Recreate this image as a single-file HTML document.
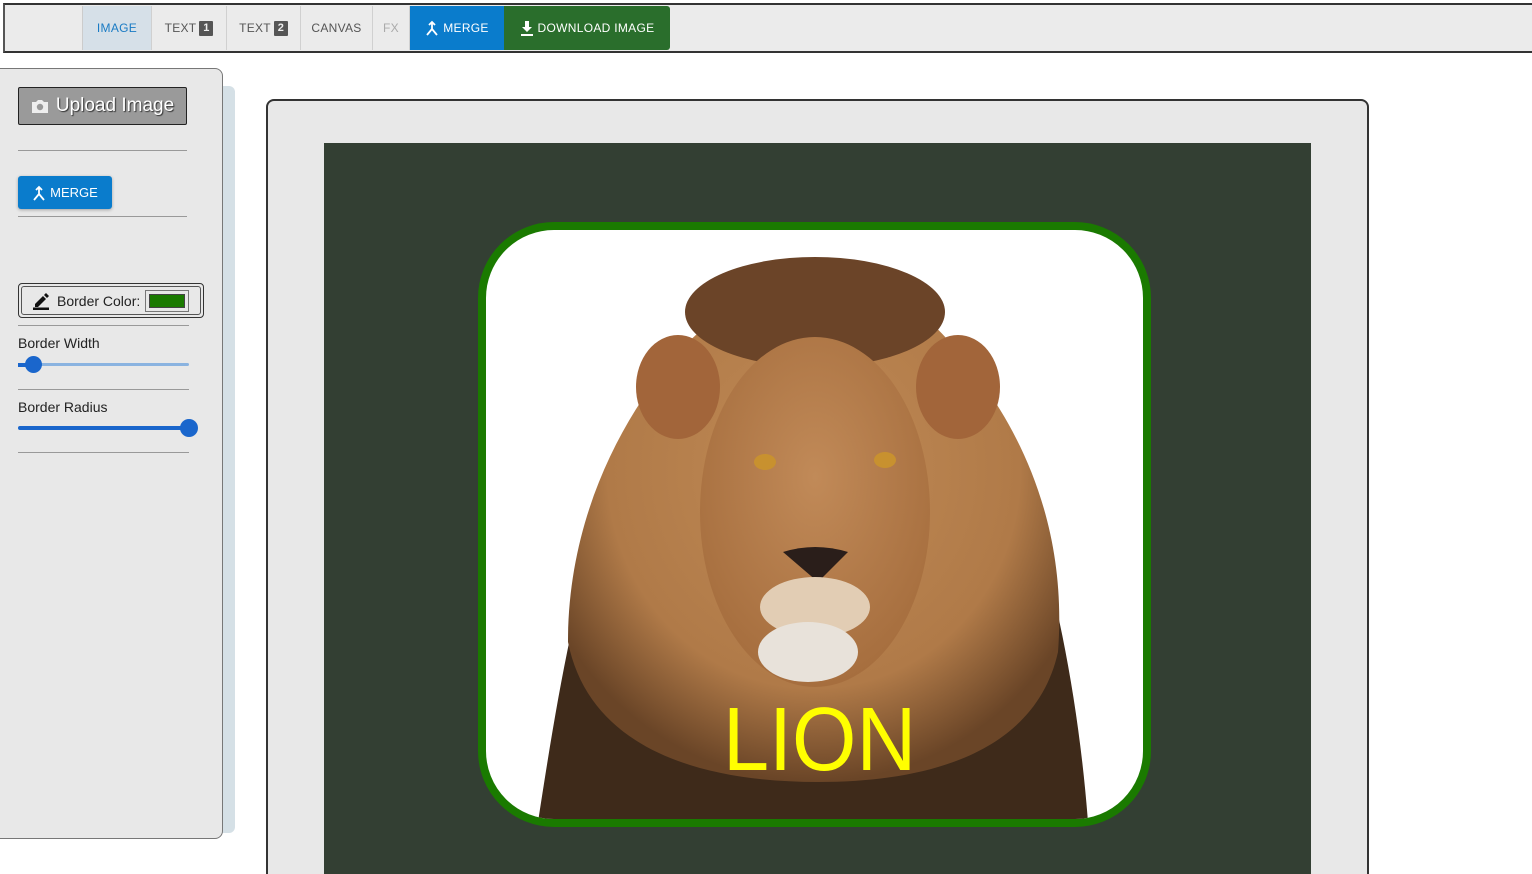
<!DOCTYPE html>
<html><head><meta charset="utf-8"><style>
*{box-sizing:border-box;margin:0;padding:0}
html,body{width:1532px;height:874px;overflow:hidden}
body{background:#fff;position:relative;font-family:"Liberation Sans",sans-serif}
.top{position:absolute;left:3px;top:3px;width:1529px;height:50px;border-top:2px solid #333;border-bottom:2px solid #333;border-left:2px solid #555;background:#ebebeb}
.tab{position:absolute;top:1px;height:44px;display:flex;align-items:center;justify-content:center;font-size:12px;letter-spacing:.3px;color:#555;border-right:1px solid #d0d0d0}
.num{display:inline-block;background:#555;color:#eee;font-size:11px;font-weight:bold;width:14px;height:15px;line-height:15px;text-align:center;margin-left:3px;border-radius:1px}
.side{position:absolute;left:-10px;top:68px;width:233px;height:771px;background:#e8e8e8;border:1px solid #777;border-radius:8px}
.strip{position:absolute;left:222px;top:86px;width:13px;height:747px;background:#d5e0e6;border-radius:0 6px 6px 0}
.hr{position:absolute;left:18px;width:169px;height:1px;background:#999}
.lbl{position:absolute;left:18px;font-size:14px;color:#222}
</style></head><body>
<div class="top">
 <div class="tab" style="left:77px;width:70px;background:#d6e0e8;color:#1a7bc4;border-left:1px solid #ccc">IMAGE</div>
 <div class="tab" style="left:147px;width:75px">TEXT<span class="num">1</span></div>
 <div class="tab" style="left:222px;width:74px">TEXT<span class="num">2</span></div>
 <div class="tab" style="left:296px;width:72px">CANVAS</div>
 <div class="tab" style="left:368px;width:37px;color:#aaa">FX</div>
 <div class="tab" style="left:405px;width:94px;background:#0a7ccc;color:#fff;border:none"><svg width="14" height="16" viewBox="0 0 14 16" style="margin-right:4px"><path d="M7 3V9L2 15M7 9L12 15M4 5L7 2L10 5" stroke="#fff" stroke-width="1.8" fill="none"/></svg>MERGE</div>
 <div class="tab" style="left:499px;width:166px;background:#2a6e2c;color:#fff;border:none;border-radius:0 3px 3px 0"><svg width="14" height="16" viewBox="0 0 14 16" style="margin-right:4px"><path d="M5 1h4v6h3L7 12 2 7h3z M1 14h12v2H1z" fill="#fff"/></svg>DOWNLOAD IMAGE</div>
</div>
<div class="strip"></div>
<div class="side"></div>
<div style="position:absolute;left:18px;top:87px;width:169px;height:38px;background:#9a9a9a;border:1px solid #222;border-radius:2px;color:#fff;font-size:19px;display:flex;align-items:center;justify-content:center;text-shadow:1px 1px 1px #333">
<svg width="18" height="15" viewBox="0 0 18 15" style="margin-right:7px"><path d="M1 3h4l2-2h4l2 2h4v11H1z" fill="#eee"/><circle cx="9" cy="8" r="3.2" fill="#999"/></svg>Upload Image</div>
<div class="hr" style="top:150px"></div>
<div style="position:absolute;left:18px;top:176px;width:94px;height:33px;background:#0a7ccc;border-radius:3px;color:#fff;font-size:13px;display:flex;align-items:center;justify-content:center;box-shadow:0 1px 3px rgba(0,0,0,.3)"><svg width="14" height="16" viewBox="0 0 14 16" style="margin-right:4px"><path d="M7 3V9L2 15M7 9L12 15M4 5L7 2L10 5" stroke="#fff" stroke-width="1.8" fill="none"/></svg>MERGE</div>
<div class="hr" style="top:216px"></div>
<div style="position:absolute;left:18px;top:283px;width:186px;height:35px;border:1px solid #333;border-radius:4px;padding:2px"><div style="width:100%;height:100%;border:1px solid #555;border-radius:3px;display:flex;align-items:center;font-size:14px;color:#222;padding-left:10px">
<svg width="18" height="18" viewBox="0 0 18 18" style="margin-right:7px"><path d="M3 12l8-8 3 3-8 8H3z M12 3l2-2 3 3-2 2z" fill="#111"/><rect x="1" y="15.5" width="16" height="2.5" fill="#111"/></svg>Border Color:<span style="margin-left:5px;width:44px;height:22px;border:1px solid #777;padding:3px;display:inline-block"><span style="display:block;width:100%;height:100%;background:#1a7a00;border:1px solid #444"></span></span></div></div>
<div class="hr" style="top:325px;width:171px"></div>
<div class="lbl" style="top:335px">Border Width</div>
<div style="position:absolute;left:18px;top:363px;width:171px;height:3px;background:#8ab3e0;border-radius:2px"></div>
<div style="position:absolute;left:18px;top:363px;width:15px;height:4px;background:#1a66cc"></div>
<div style="position:absolute;left:25px;top:356px;width:17px;height:17px;border-radius:50%;background:#1a66cc"></div>
<div class="hr" style="top:389px;width:171px"></div>
<div class="lbl" style="top:399px">Border Radius</div>
<div style="position:absolute;left:18px;top:426px;width:171px;height:4px;background:#1a66cc;border-radius:2px"></div>
<div style="position:absolute;left:180px;top:419px;width:18px;height:18px;border-radius:50%;background:#1a66cc"></div>
<div class="hr" style="top:452px;width:171px"></div>

<div style="position:absolute;left:266px;top:99px;width:1103px;height:800px;background:#e8e8e8;border:2px solid #333;border-radius:8px"></div>
<div style="position:absolute;left:324px;top:143px;width:987px;height:740px;background:#333f33"></div>
<svg style="position:absolute;left:478px;top:222px" width="673" height="605" viewBox="0 0 673 605">
<defs>
<clipPath id="c"><rect x="8" y="8" width="657" height="589" rx="68"/></clipPath>
<radialGradient id="m" cx="0.5" cy="0.4" r="0.6"><stop offset="0" stop-color="#c08a55"/><stop offset=".7" stop-color="#b07a48"/><stop offset="1" stop-color="#6a4527"/></radialGradient>
<radialGradient id="f" cx="0.5" cy="0.4" r="0.6"><stop offset="0" stop-color="#c18a58"/><stop offset="1" stop-color="#a66e3e"/></radialGradient>
</defs>
<rect x="4" y="4" width="665" height="597" rx="72" fill="#fff" stroke="#1a7a00" stroke-width="8"/>
<g clip-path="url(#c)">
<path d="M60 600 C80 470 100 350 140 250 C170 150 250 70 337 60 C430 70 510 150 540 250 C575 350 600 470 610 600 Z" fill="#3e2a1a"/>
<path d="M90 420 C90 300 140 200 200 130 C250 80 300 50 340 40 C390 50 440 80 480 130 C540 200 590 300 580 430 C560 520 470 560 340 560 C210 560 110 520 90 420 Z" fill="url(#m)"/>
<ellipse cx="337" cy="90" rx="130" ry="55" fill="#6b4428"/>
<ellipse cx="200" cy="165" rx="42" ry="52" fill="#a2653a"/>
<ellipse cx="480" cy="165" rx="42" ry="52" fill="#a2653a"/>
<ellipse cx="337" cy="290" rx="115" ry="175" fill="url(#f)"/>
<ellipse cx="287" cy="240" rx="11" ry="8" fill="#c8912f"/>
<ellipse cx="407" cy="238" rx="11" ry="8" fill="#c8912f"/>
<path d="M305 330 Q337 320 370 330 L340 360 Z" fill="#2a1e1a"/>
<ellipse cx="337" cy="385" rx="55" ry="30" fill="#e2cdb4"/>
<ellipse cx="330" cy="430" rx="50" ry="30" fill="#e8e2da"/>
</g>
</svg>
<div style="position:absolute;left:723px;top:690px;width:200px;font-size:90px;line-height:100px;color:#ffff00;transform:scaleX(.92);transform-origin:left top;white-space:nowrap">LION</div>
</body></html>
